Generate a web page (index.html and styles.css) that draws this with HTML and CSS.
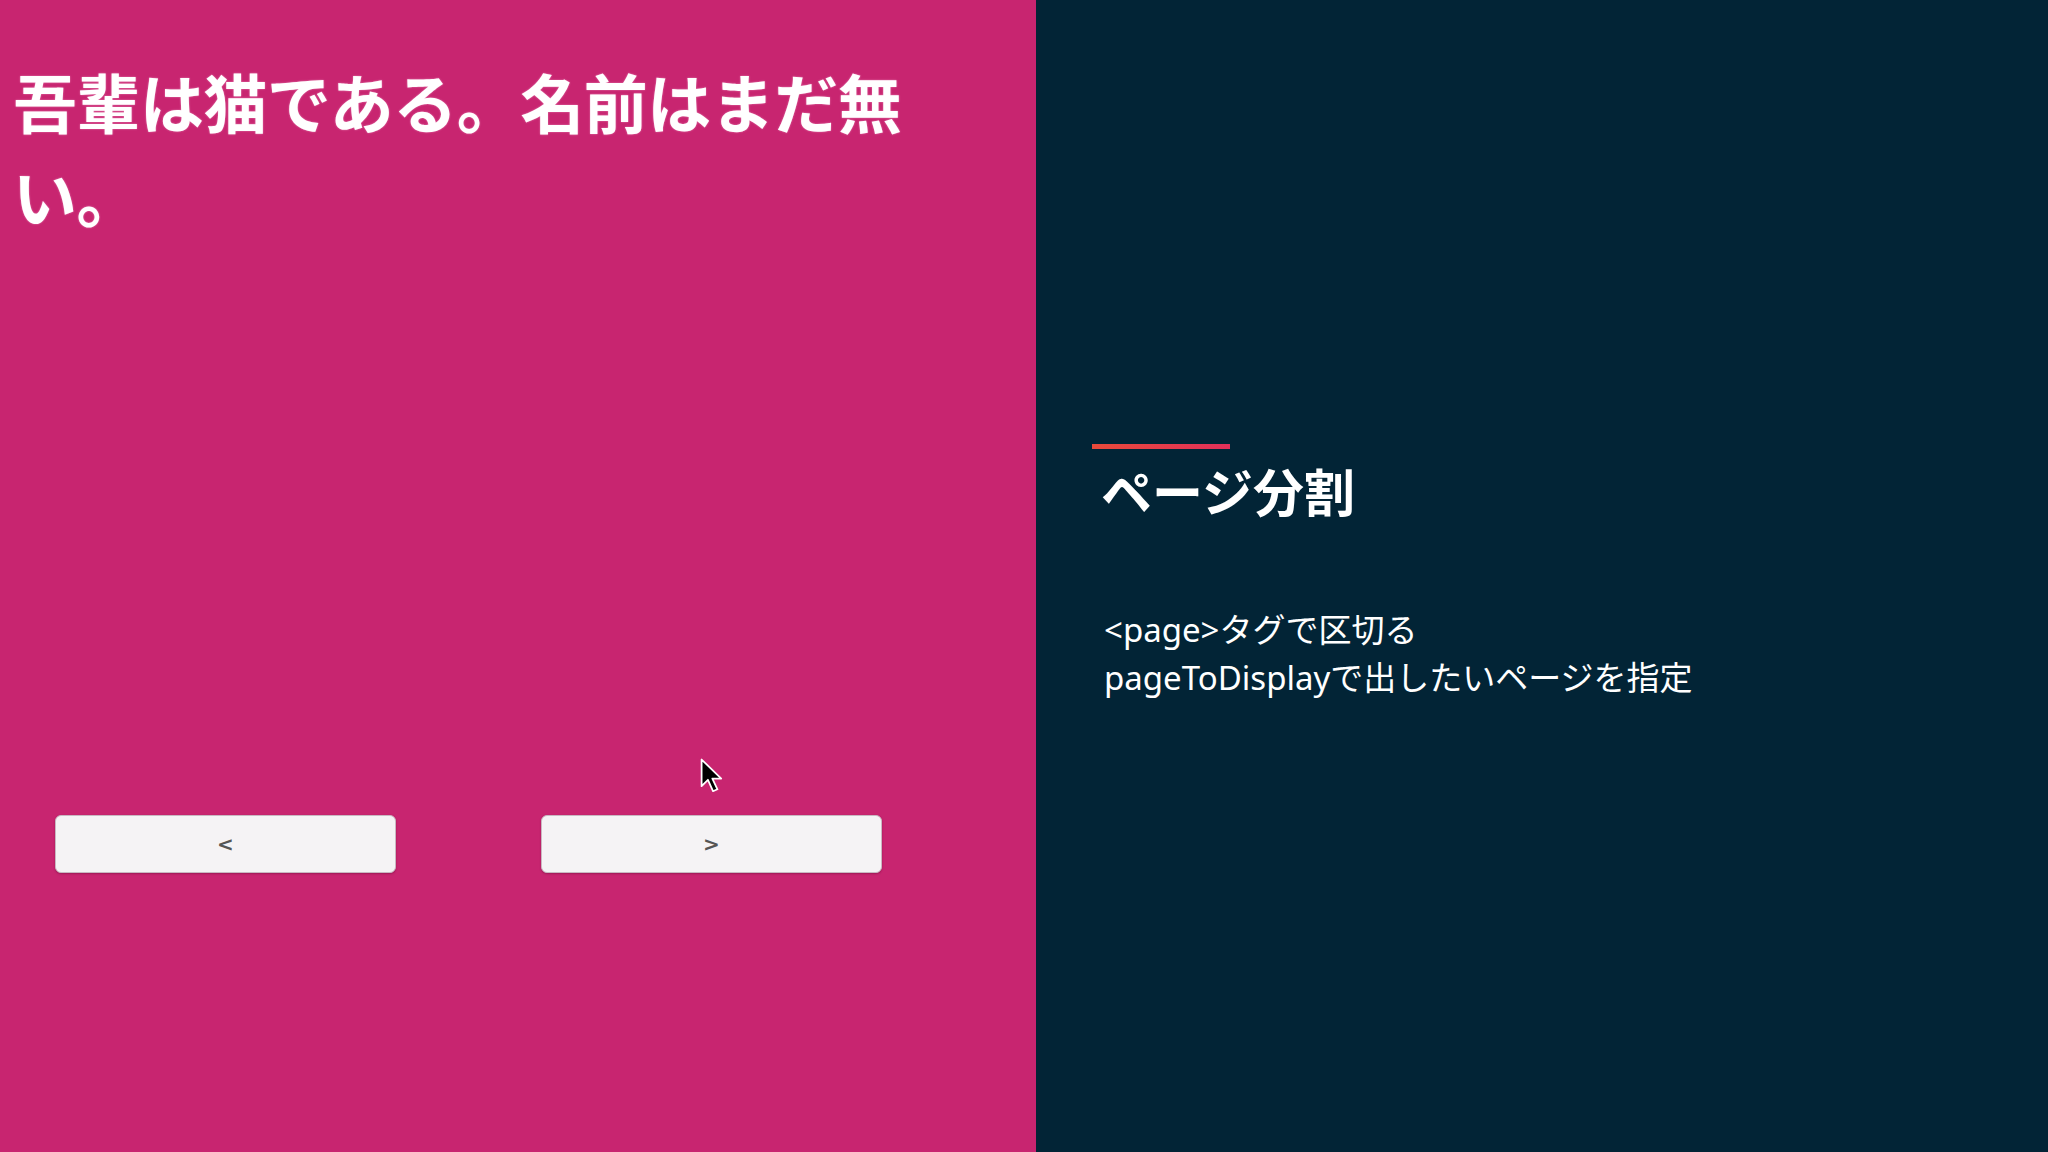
FILE: index.html
```html
<!DOCTYPE html>
<html lang="ja">
<head>
<meta charset="utf-8">
<title>ページ分割</title>
<link rel="stylesheet" href="styles.css">
</head>
<body>
<div class="slide">
  <section class="demo">
    <p class="story">吾輩は猫である。名前はまだ無い。</p>
    <div class="nav">
      <button class="nav-btn">&lt;</button>
      <button class="nav-btn">&gt;</button>
    </div>
    <svg class="cursor" width="28" height="38" viewBox="0 0 22 30">
      <path d="M2 2 L2 23 L7 18 L11 27 L14.5 25.5 L10.5 17 L17.5 17 Z" fill="#000" stroke="#fff" stroke-width="1.4" stroke-linejoin="round"/>
    </svg>
  </section>
  <section class="notes">
    <div class="accent"></div>
    <h1 class="title">ページ分割</h1>
    <div class="body">
      <p>&lt;page&gt;タグで区切る</p>
      <p>pageToDisplayで出したいページを指定</p>
    </div>
  </section>
</div>
</body>
</html>
```

FILE: styles.css
```css
html, body {
  margin: 0;
  padding: 0;
}
body {
  width: 2048px;
  height: 1152px;
  overflow: hidden;
  font-family: "Noto Sans CJK JP", "Noto Sans", sans-serif;
}
.slide {
  display: flex;
  width: 2048px;
  height: 1152px;
}
.demo {
  position: relative;
  width: 1036px;
  height: 1152px;
  background: #c82570;
  box-sizing: border-box;
  padding: 53px 0 0 13px;
}
.story {
  margin: 0;
  width: 930px;
  font-size: 64px;
  line-height: 94px;
  font-weight: 700;
  color: #ffffff;
  letter-spacing: -0.5px;
  text-shadow: 0 0 2px rgba(255, 200, 230, 0.6);
}
.nav {
  display: flex;
  gap: 145px;
  margin: 574px 0 0 42px;
}
.nav-btn {
  width: 341px;
  height: 58px;
  background: #f5f3f5;
  border: 1px solid #c9b8c2;
  border-radius: 6px;
  box-shadow: 0 1px 2px rgba(80, 0, 40, 0.35);
  color: #555555;
  font-family: "DejaVu Sans", sans-serif;
  font-size: 20px;
  font-weight: 700;
  padding: 0;
}
.cursor {
  position: absolute;
  left: 699px;
  top: 757px;
}
.notes {
  flex: 1;
  background: #022436;
  box-sizing: border-box;
  padding: 444px 0 0 56px;
  color: #ffffff;
}
.accent {
  width: 138px;
  height: 5px;
  background: linear-gradient(90deg, #ea4a3a, #e2305a);
}
.title {
  margin: 11px 0 0 0;
  padding-left: 9px;
  font-size: 51px;
  line-height: 60px;
  font-weight: 700;
}
.body {
  margin-top: 86px;
  padding-left: 12px;
  font-family: "Noto Sans", "Noto Sans CJK JP", sans-serif;
  font-size: 33px;
  line-height: 48px;
  font-weight: 400;
}
.body p {
  margin: 0;
}
```
